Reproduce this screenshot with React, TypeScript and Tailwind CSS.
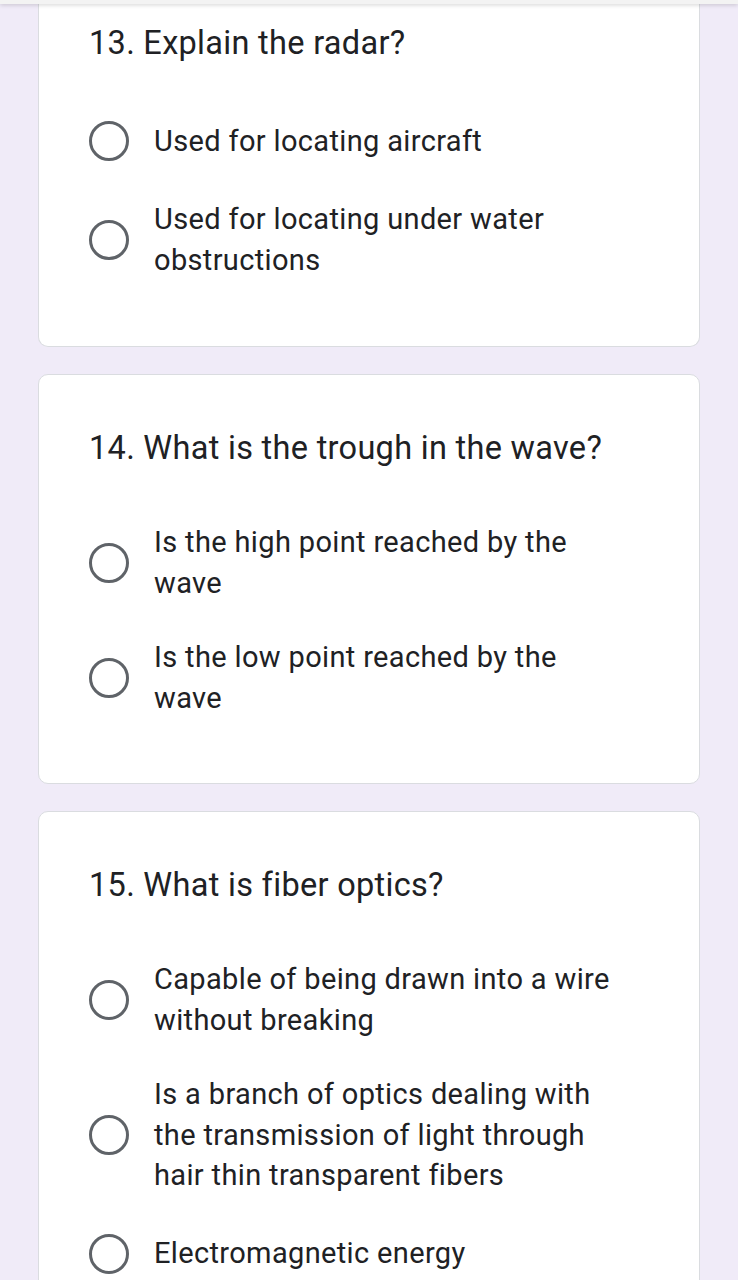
import React from "react";

type Question = {
  title: string;
  options: string[];
};

const questions: Question[] = [
  {
    title: "13. Explain the radar?",
    options: ["Used for locating aircraft", "Used for locating under water obstructions"],
  },
  {
    title: "14. What is the trough in the wave?",
    options: ["Is the high point reached by the wave", "Is the low point reached by the wave"],
  },
  {
    title: "15. What is fiber optics?",
    options: [
      "Capable of being drawn into a wire without breaking",
      "Is a branch of optics dealing with the transmission of light through hair thin transparent fibers",
      "Electromagnetic energy",
    ],
  },
];

function Radio() {
  return (
    <div className="h-[48px] w-[40px] shrink-0 flex items-center justify-center">
      <div className="w-[40px] h-[40px] rounded-full border-[3.5px] border-[#5f6368]" />
    </div>
  );
}

function QuestionCard({ q, first }: { q: Question; first?: boolean }) {
  return (
    <div
      className={
        first
          ? "bg-white rounded-b-[10px] border border-t-0 border-[#dadce0] pl-[50px] pr-[30px] pt-[15px] pb-[66px]"
          : "bg-white rounded-[10px] border border-[#dadce0] pl-[50px] pr-[30px] pt-[49px] pb-[65px]"
      }
    >
      <div className="text-[32.5px] leading-[48px] text-[#202124] tracking-[0.3px]">{q.title}</div>
      <div className="mt-[50px] flex flex-col gap-[34px]">
        {q.options.map((opt) => (
          <div key={opt} className="flex items-center gap-[25px]">
            <Radio />
            <div className="w-[470px] text-[29px] leading-[40.5px] text-[#202124] tracking-[0.35px]">{opt}</div>
          </div>
        ))}
      </div>
    </div>
  );
}

export default function App() {
  return (
    <div
      className="h-[1280px] overflow-hidden bg-[#f0ebf8]"
      style={{ fontFamily: "Roboto, 'Noto Sans', sans-serif" }}
    >
      {/* top bar */}
      <div className="relative z-10 h-[4px] bg-[#f3f3f3] shadow-[0_1px_4px_rgba(0,0,0,0.18)]" />
      <div className="flex flex-col gap-[27px] pl-[38px] pr-[38px]">
        {questions.map((q, i) => (
          <QuestionCard key={q.title} q={q} first={i === 0} />
        ))}
      </div>
    </div>
  );
}
